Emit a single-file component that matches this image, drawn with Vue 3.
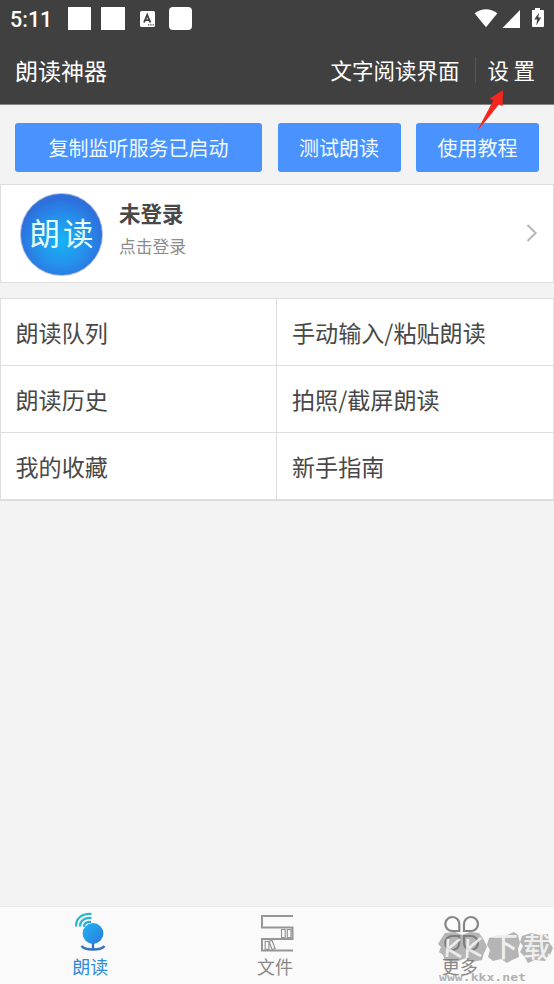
<script setup>
const entries = [
  '朗读队列', '手动输入/粘贴朗读',
  '朗读历史', '拍照/截屏朗读',
  '我的收藏', '新手指南',
]
</script>

<template>
  <div class="screen">
    <header class="top">
      <div class="status">
        <span class="clock">5:11</span>
        <i class="block first"></i>
        <i class="block second"></i>
        <svg class="lang" width="15" height="16" viewBox="0 0 15 16">
          <rect width="15" height="16" rx="1.5" fill="#fff" />
          <path d="M4 11.5 7.2 3.8 10.4 11.5M5.2 9.2h4" fill="none" stroke="#404040" stroke-width="1.8" />
          <path d="M8 13.9h1.3M10.3 13.9h1.3M12.6 13.9h1.2" stroke="#404040" stroke-width="1.3" />
        </svg>
        <i class="block round"></i>
        <svg class="signals" width="72" height="22" viewBox="0 0 72 22">
          <path d="M1.6 5.2Q13-2.6 24.4 5.2L13 19.2Z" fill="#fff" />
          <path d="M47 2V20H29.5Z" fill="#fff" />
          <path d="M59 2h3V0h5v2h3q1 0 1 1v15q0 1-1 1H60q-1 0-1-1z" fill="#fff" />
          <path d="M66 4.8 61.2 11.5h3l-1 6 5-8h-2.9z" fill="#404040" />
        </svg>
      </div>
      <div class="titlebar">
        <h1>朗读神器</h1>
        <span class="reader">文字阅读界面</span>
        <span class="settings">设 置</span>
      </div>
    </header>

    <svg class="pointer" width="30" height="44" viewBox="0 0 30 44">
      <path d="M2 42 18.3 11.6 14.8 9.6 28 1 27.6 17.2 24 15.2 13.5 28.5Z" fill="#f5261d" />
    </svg>

    <main>
      <div class="actions">
        <button class="wide">复制监听服务已启动</button>
        <button>测试朗读</button>
        <button>使用教程</button>
      </div>

      <section class="profile">
        <div class="avatar"><span>朗</span><span>读</span></div>
        <div class="who">
          <strong>未登录</strong>
          <span>点击登录</span>
        </div>
        <svg class="chevron" width="12" height="20" viewBox="0 0 12 20">
          <path d="M1.5 2 9.7 10 1.5 18" fill="none" stroke="#b5b5b5" stroke-width="1.9" />
        </svg>
      </section>

      <section class="menu">
        <div v-for="entry in entries" :key="entry" class="cell">{{ entry }}</div>
      </section>
    </main>

    <nav class="tabs">
      <div class="tab active">
        <svg width="40" height="42" viewBox="0 0 40 42">
          <defs>
            <linearGradient id="ball" x1="0" y1="0" x2="1" y2="1">
              <stop offset="0" stop-color="#20b5f1" />
              <stop offset="1" stop-color="#2b79df" />
            </linearGradient>
          </defs>
          <g fill="none" stroke="#26b8c9" stroke-width="2.2">
            <path d="M4.2 14.5C3.5 7 9 1.4 19.5 2" />
            <path d="M8 14.5C7.7 9.3 12 5.6 19.5 6" stroke="#25b6d4" />
            <path d="M11.8 14.7C12 11.5 14.5 9.7 19 10" stroke="#24a9df" />
          </g>
          <circle cx="21" cy="21.5" r="10.4" fill="url(#ball)" />
          <path d="M21 31v6M9.5 34Q12 37.5 21 37.5T32.5 34" fill="none" stroke="#3673bf" stroke-width="2.3" />
        </svg>
        <span>朗读</span>
      </div>
      <div class="tab">
        <svg width="40" height="42" viewBox="0 0 40 42" fill="none" stroke="#969696">
          <path d="M36 4H5v11.5h30.5V27H5v11.5h31" stroke-width="2" />
          <path d="M24.5 17.5h3.7v8.2h-3.7zM30.3 17.5H34v8.2h-3.7zM8.2 29.3h3.7v8H8.2zM12 29.3l3-.8 3.2 8.2-3.1.8z" stroke-width="1.2" />
        </svg>
        <span>文件</span>
      </div>
      <div class="tab">
        <svg width="40" height="42" viewBox="0 0 40 42" fill="none" stroke="#858585" stroke-width="2.2">
          <path d="M17.3 19V12.3A7 7 0 1 0 10.3 19Z" />
          <path d="M22 19V12.3A7 7 0 1 1 29 19Z" />
          <path d="M17.3 24H10.3A7 7 0 1 0 17.3 31Z" />
          <path d="M22 24h7A7 7 0 1 1 22 31Z" />
        </svg>
        <span>更多</span>
      </div>
    </nav>

    <svg class="watermark" width="118" height="56" viewBox="0 0 118 56">
      <g fill="#777" opacity=".52">
        <path d="M5 9 9 3 19 2 26 5 34 2 43 3 48 10 51 17 48 23 46 30 37 32 30 28 20 32 9 31 7 25 3 22 5 17 2 14Z" />
        <path d="M53 8 61 5 71 5 78 2 82 5 84 13 82 19 83 27 76 30 71 33 65 29 57 31 52 27 54 20 51 15Z" />
        <path d="M86 6 95 3 103 5 112 4 113 12 117 18 114 25 109 31 99 30 92 33 88 26 84 22 87 16 84 12Z" />
      </g>
      <g fill="none" stroke="#fff" stroke-width="2.8" opacity=".75">
        <path d="M12 9 11 27M24 9 12 19 25 27M32 9 31 28M45 8 32 19 45 26" />
      </g>
      <text x="54" y="27" class="mark">下</text>
      <text x="87" y="28" class="mark">载</text>
      <text x="3" y="51" class="site" textLength="87" lengthAdjust="spacingAndGlyphs">www.kkx.net</text>
    </svg>
  </div>
</template>

<style>
body {
  background: #f3f3f3;
}
</style>

<style scoped>
.screen {
  position: relative;
  display: flex;
  flex-direction: column;
  width: 554px;
  height: 984px;
  overflow: hidden;
  background: #f3f3f3;
  color: #484848;
  font-family: "Noto Sans CJK SC", sans-serif;
  font-weight: 400;
}
.top {
  box-sizing: border-box;
  height: 105px;
  border-bottom: 1px solid #858585;
  background: #404040;
  color: #fff;
}
.status {
  display: flex;
  align-items: center;
  height: 37px;
  padding: 0 9px 0 10px;
}
.clock {
  width: 58px;
  padding-top: 2px;
  font: 500 21.5px/24px Roboto, sans-serif;
}
.block {
  width: 23px;
  height: 23px;
  background: #fff;
}
.second {
  width: 24px;
  margin-left: 10px;
}
.lang {
  margin-left: 15px;
}
.round {
  margin-left: 14px;
  border-radius: 4px;
}
.signals {
  margin-left: auto;
}
.titlebar {
  display: flex;
  align-items: center;
  height: 66px;
  padding: 0 19px 0 15px;
}
h1 {
  margin: 0;
  font-size: 23px;
  font-weight: 400;
  line-height: 34px;
}
.reader {
  margin-left: auto;
  padding-right: 16px;
  border-right: 1px solid #555;
  font-size: 21.5px;
  line-height: 26px;
}
.settings {
  padding-left: 11px;
  font-size: 21.4px;
  line-height: 30px;
}
.pointer {
  position: absolute;
  top: 89px;
  left: 475px;
}
main {
  flex: 1;
}
.actions {
  display: grid;
  grid-template-columns: 247px 123px 123px;
  justify-content: space-between;
  padding: 18px 15px 12px;
}
button {
  height: 49px;
  padding: 0;
  border: 0;
  border-radius: 3px;
  background: #4a93ff;
  color: #f0faff;
  font: 400 20px/49px "Noto Sans CJK SC", sans-serif;
}
.profile {
  box-sizing: border-box;
  display: flex;
  height: 99px;
  padding: 8px 15px 0 19px;
  border: 1px solid #ddd;
  background: #fff;
}
.avatar {
  box-sizing: border-box;
  display: flex;
  justify-content: center;
  gap: 3px;
  width: 83px;
  height: 83px;
  border: 1px solid #a9b9dd;
  border-radius: 50%;
  background: radial-gradient(circle at 50% 58%, #17b3f4 0, #2492ec 38%, #2d70dd 68%);
  color: #e2ffff;
  font-size: 30.5px;
  font-weight: 400;
  line-height: 76px;
}
.who {
  display: flex;
  flex-direction: column;
  margin-left: 16px;
  padding-top: 7px;
}
.who strong {
  font-size: 21.5px;
  font-weight: 700;
  line-height: 26px;
}
.who span {
  margin-top: 7px;
  color: #8c8c8c;
  font-size: 16.8px;
  line-height: 26px;
}
.chevron {
  margin: 30px 0 0 auto;
}
.menu {
  display: grid;
  grid-template-columns: 277px 277px;
  margin-top: 15px;
  border-top: 1px solid #ddd;
  border-bottom: 1px solid #ddd;
}
.cell {
  box-sizing: border-box;
  height: 67px;
  padding-left: 14.5px;
  border: solid #ddd;
  border-width: 0 0 1px 1px;
  background: #fff;
  font-size: 23.1px;
  line-height: 66px;
}
.cell:nth-child(even) {
  padding-left: 15px;
  border-left-width: 0;
  box-shadow: inset -1px 0 #e3e3e3, -1px 0 #ddd;
}
.tabs {
  box-sizing: border-box;
  display: grid;
  grid-template-columns: repeat(3, 1fr);
  height: 78px;
  padding-top: 5px;
  border-top: 1px solid #e9e9e9;
  background: #fafafa;
}
.tab {
  display: flex;
  flex-direction: column;
  align-items: center;
  color: #888;
  font-size: 18px;
  line-height: 24px;
}
.tab span {
  margin: 0 4px 0 0;
}
.active {
  color: #2f8ad6;
}
.watermark {
  position: absolute;
  top: 930px;
  left: 436px;
  overflow: visible;
}
.mark {
  fill: #fff;
  fill-opacity: .8;
  font-size: 28px;
  font-weight: 500;
}
.site {
  fill: #888;
  fill-opacity: .65;
  font: 700 11px "DejaVu Sans Mono", monospace;
}
</style>
